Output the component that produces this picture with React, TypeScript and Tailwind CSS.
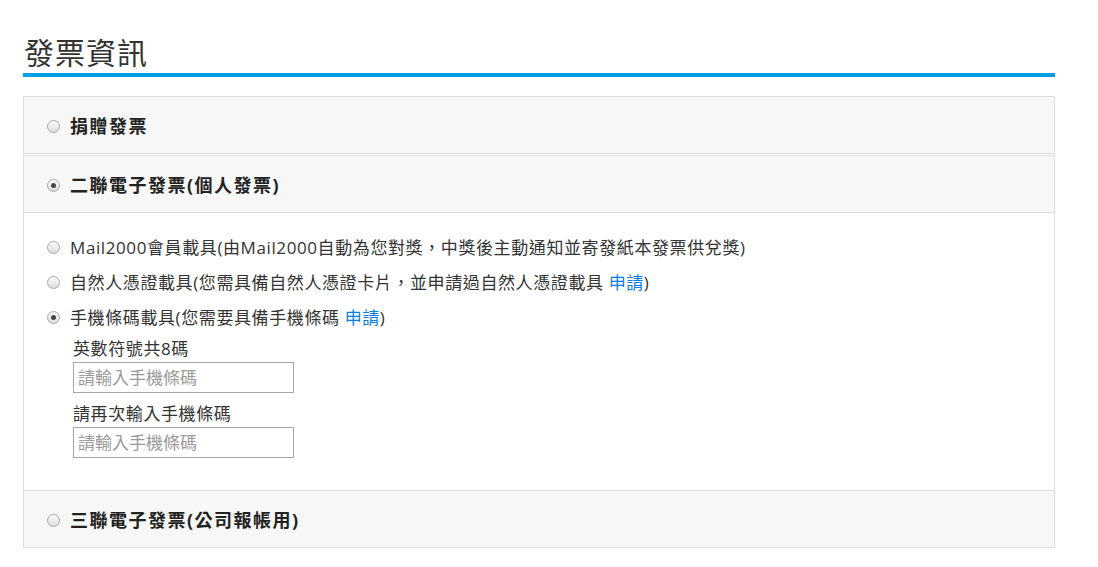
import React, { useState } from 'react';

const font = { fontFamily: '"Open Sans", "Noto Sans CJK TC", sans-serif' };

const Radio: React.FC<{ checked?: boolean }> = ({ checked }) => (
  <span className="inline-flex h-[13px] w-[13px] shrink-0 items-center justify-center rounded-full border border-[#a9a9a9] bg-gradient-to-b from-[#fdfdfd] to-[#dcdcdc]">
    {checked && <span className="h-[5px] w-[5px] rounded-full bg-[#444]" />}
  </span>
);

const PanelHeader: React.FC<{ checked?: boolean; label: string; onClick: () => void }> = ({ checked, label, onClick }) => (
  <div
    onClick={onClick}
    className="flex h-[58px] cursor-pointer items-center gap-[10px] border border-[#dddddd] bg-[#f7f7f7] pl-[23px] pt-[2px]"
  >
    <Radio checked={checked} />
    <span className="text-[18px] font-bold tracking-[1.5px] text-[#222]">{label}</span>
  </div>
);

export default function App() {
  const [type, setType] = useState('two');
  const [carrier, setCarrier] = useState('mobile');

  return (
    <div className="min-h-screen bg-white text-[#333]" style={font}>
      <div className="ml-[23px] w-[1032px] pt-[33px]">
        <h2 className="border-b-4 border-[#009fe8] pl-[1px] text-[30px] font-normal leading-[40px] tracking-[1px] text-[#333]">
          發票資訊
        </h2>

        <div className="mt-[19px]">
          <PanelHeader label="捐贈發票" checked={type === 'donate'} onClick={() => setType('donate')} />

          <div className="mt-[1px]">
            <PanelHeader label="二聯電子發票(個人發票)" checked={type === 'two'} onClick={() => setType('two')} />
            <div className="border-x border-[#dddddd] pb-[32px] pl-[23px] pt-[17px] text-[17px] tracking-[0.6px]">
              <div className="flex h-[35px] items-center gap-[10px]" onClick={() => setCarrier('mail')}>
                <Radio checked={carrier === 'mail'} />
                <span>Mail2000會員載具(由Mail2000自動為您對獎，中獎後主動通知並寄發紙本發票供兌獎)</span>
              </div>
              <div className="flex h-[35px] items-center gap-[10px]" onClick={() => setCarrier('cert')}>
                <Radio checked={carrier === 'cert'} />
                <span>
                  自然人憑證載具(您需具備自然人憑證卡片，並申請過自然人憑證載具 <a className="text-[#0b7ee6]">申請</a>)
                </span>
              </div>
              <div className="flex h-[35px] items-center gap-[10px]" onClick={() => setCarrier('mobile')}>
                <Radio checked={carrier === 'mobile'} />
                <span>
                  手機條碼載具(您需要具備手機條碼 <a className="text-[#0b7ee6]">申請</a>)
                </span>
              </div>

              <div className="ml-[26px]">
                <div className="mt-[1px] leading-[26px]">英數符號共8碼</div>
                <input
                  className="h-[31px] w-[221px] border border-[#a6a6a6] px-[4px] text-[17px] tracking-normal outline-none placeholder:text-[#9a9a9a]"
                  placeholder="請輸入手機條碼"
                />
                <div className="mt-[8px] leading-[26px]">請再次輸入手機條碼</div>
                <input
                  className="h-[31px] w-[221px] border border-[#a6a6a6] px-[4px] text-[17px] tracking-normal outline-none placeholder:text-[#9a9a9a]"
                  placeholder="請輸入手機條碼"
                />
              </div>
            </div>
          </div>

          <PanelHeader label="三聯電子發票(公司報帳用)" checked={type === 'three'} onClick={() => setType('three')} />
        </div>
      </div>
    </div>
  );
}
